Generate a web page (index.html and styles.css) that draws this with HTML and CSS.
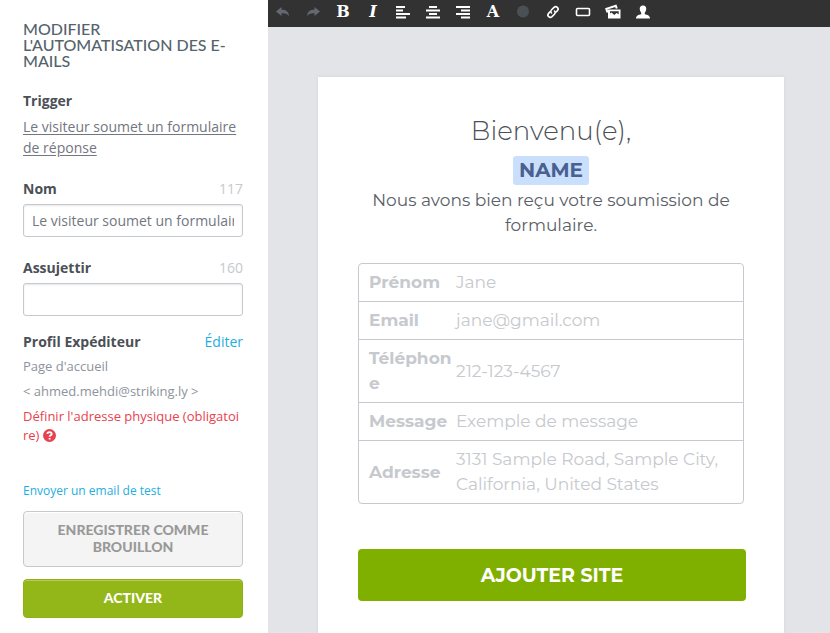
FILE: index.html
```
<!DOCTYPE html>
<html lang="fr">
<head>
<meta charset="utf-8">
<title>Modifier l'automatisation des e-mails</title>
<link rel="stylesheet" href="styles.css">
</head>
<body>
<div class="app">
  <aside class="sidebar">
    <h1 class="sidebar-title">Modifier l'automatisation des e-mails</h1>
    <section class="group">
      <h2 class="label">Trigger</h2>
      <a class="trigger" href="#">Le visiteur soumet un formulaire de réponse</a>
    </section>
    <div class="group">
      <div class="row"><label class="label" for="nom">Nom</label><span class="count">117</span></div>
      <input class="field" id="nom" type="text" value="Le visiteur soumet un formulaire de réponse">
    </div>
    <div class="group">
      <div class="row"><label class="label" for="sujet">Assujettir</label><span class="count">160</span></div>
      <input class="field" id="sujet" type="text">
    </div>
    <section class="profile">
      <div class="row"><h2 class="label">Profil Expéditeur</h2><a class="edit" href="#">Éditer</a></div>
      <p class="line">Page d'accueil</p>
      <p class="line">&lt; ahmed.mehdi@striking.ly &gt;</p>
      <a class="line warning" href="#">Définir l'adresse physique (obligatoire) <svg class="help" viewBox="0 0 12 12" aria-hidden="true"><circle cx="6" cy="6" r="6" fill="#e8424f"/><path d="M4 4.5C4.100 2.300 8 2.300 8 4.500C8 5.900 6.100 5.700 6.100 7.200M6.100 8.200V9.800" fill="none" stroke="#fff" stroke-width="1.700"/></svg></a>
    </section>
    <a class="test" href="#">Envoyer un email de test</a>
    <button class="btn btn-draft" type="button">Enregistrer comme brouillon</button>
    <button class="btn btn-activate" type="button">Activer</button>
  </aside>
  <main class="editor">
    <div class="toolbar" role="toolbar">
      <button class="tool off" type="button" aria-label="Annuler"><svg viewBox="0 0 16 16"><path d="M1 7.500L6.500 3V5.800C11 5.800 13.500 7.500 14 12C12.300 9.700 10 9.200 6.500 9.300V12Z"/></svg></button>
      <button class="tool off" type="button" aria-label="Rétablir"><svg viewBox="0 0 16 16"><path d="M15 7.500L9.500 3V5.800C5 5.800 2.500 7.500 2 12C3.700 9.700 6 9.200 9.500 9.300V12Z"/></svg></button>
      <button class="tool letter" type="button">B</button>
      <button class="tool letter italic" type="button">I</button>
      <button class="tool" type="button" aria-label="Aligner à gauche"><svg viewBox="0 0 16 16"><path d="M1 2h9v2H1zM1 5.500h7v2H1zM1 9h14v2H1zM1 12.500h10v2H1z"/></svg></button>
      <button class="tool" type="button" aria-label="Centrer"><svg viewBox="0 0 16 16"><path d="M4 2h8v2H4zM1 5.500h14v2H1zM4 9h8v2H4zM1 12.500h14v2H1z"/></svg></button>
      <button class="tool" type="button" aria-label="Aligner à droite"><svg viewBox="0 0 16 16"><path d="M1 2h14v2H1zM6 5.500h9v2H6zM1 9h14v2H1zM6 12.500h9v2H6z"/></svg></button>
      <button class="tool letter" type="button">A</button>
      <button class="tool" type="button" aria-label="Couleur"><svg viewBox="0 0 16 16"><circle cx="8" cy="7.500" r="6" fill="#4b5056"/></svg></button>
      <button class="tool" type="button" aria-label="Lien"><svg viewBox="0 0 16 16"><g fill="none" stroke="#fff" stroke-width="1.600" stroke-linecap="round"><path d="M6.500 9C5.400 7.900 5.700 6.700 6.600 5.800L9 3.400C11.200 1.400 14.500 4.200 12.500 6.600L10.800 8.300"/><path d="M9.500 7C10.600 8.100 10.300 9.300 9.400 10.200L7 12.600C4.800 14.600 1.500 11.800 3.500 9.400L5 7.900"/></g></svg></button>
      <button class="tool" type="button" aria-label="Bouton"><svg viewBox="0 0 16 16"><rect x="1.500" y="4.500" width="13" height="7" rx="1" fill="none" stroke="#fff" stroke-width="1.600"/></svg></button>
      <button class="tool" type="button" aria-label="Image"><svg viewBox="0 0 16 16"><path d="M2.500 8.500L1.300 4.800L10.800 1.800L11.800 4.500" fill="none" stroke="#fff" stroke-width="2"/><path fill-rule="evenodd" d="M3 5.500H15.500V14.500H3ZM5 7.300V9.500L6.500 8.500L9.300 11L11.500 9L13.700 10.300V7.300Z"/></svg></button>
      <button class="tool" type="button" aria-label="Contact"><svg viewBox="0 0 16 16"><path d="M8 1.500C10.500 1.500 11.600 3.200 11.200 5.500C11 7.200 10 8.300 9.800 8.800V10.300C12.500 11 15 11.500 15 14.500H1C1 11.500 3.500 11 6.200 10.300V8.800C6 8.300 5 7.200 4.800 5.500C4.400 3.200 5.500 1.500 8 1.500Z"/></svg></button>
    </div>
    <div class="canvas">
      <article class="mail">
        <h2 class="greeting">Bienvenu(e),</h2>
        <div class="name-row"><span class="name-tag">NAME</span></div>
        <p class="intro">Nous avons bien reçu votre soumission de formulaire.</p>
        <table class="fields">
          <tr><th scope="row">Prénom</th><td>Jane</td></tr>
          <tr><th scope="row">Email</th><td>jane@gmail.com</td></tr>
          <tr><th scope="row">Téléphone</th><td>212-123-4567</td></tr>
          <tr><th scope="row">Message</th><td>Exemple de message</td></tr>
          <tr><th scope="row">Adresse</th><td>3131 Sample Road, Sample City, California, United States</td></tr>
        </table>
        <button class="cta" type="button">AJOUTER SITE</button>
      </article>
    </div>
  </main>
</div>
</body>
</html>
```
FILE: styles.css
```
* { box-sizing: border-box; }
body {
  margin: 0;
  font: 14px/20px "Open Sans", "Noto Sans", sans-serif;
  color: #636972;
}
h1, h2, p { margin: 0; }
a { color: #1eaee0; text-decoration: none; }
button, input { font: inherit; }

.app { display: flex; height: 100vh; overflow: hidden; }

.sidebar {
  flex: 0 0 268px;
  display: flex;
  flex-direction: column;
  padding: 21px 25px 0 23px;
  background: #fff;
}
.sidebar-title {
  margin-bottom: 22px;
  font: 500 16px/16px "Brandon Grotesque", Lato, sans-serif;
  text-transform: uppercase;
  color: #55636c;
}
.group { margin-bottom: 21px; }
.row { display: flex; justify-content: space-between; }
.label { font-size: 14px; font-weight: 700; line-height: 20px; color: #4b5056; }
.count { color: #c6c9cd; }
.trigger {
  display: block;
  margin-top: 5px;
  line-height: 21px;
  color: #72767f;
  text-decoration: underline;
  text-underline-offset: 2px;
}
.field {
  display: block;
  width: 100%;
  height: 33px;
  margin-top: 5px;
  padding: 0 8px;
  border: 1px solid #c6c9cd;
  border-radius: 3px;
  box-shadow: inset 0 1px 2px #e6e7ea;
  color: #72767f;
}
.profile { margin: -5px 0 37px; }
.line {
  display: block;
  margin-top: 6px;
  font-size: 13px;
  line-height: 19px;
  color: #8e939c;
  word-break: break-all;
}
.row + .line { margin-top: 5px; }
.warning { color: #e8424f; }
.help { width: 13px; height: 13px; vertical-align: -2px; }
.test { margin-bottom: 11px; font-size: 12px; line-height: 18px; }

.btn {
  padding: 9px 20px 11px;
  border: 1px solid;
  border-radius: 4px;
  font: 900 14px/17px "Brandon Grotesque", Lato, sans-serif;
  text-transform: uppercase;
}
.btn-draft { margin-bottom: 12px; background: #f4f4f4; border-color: #c6c9cd; color: #999; box-shadow: inset 0 1px #fff; }
.btn-activate { background: #93b719; border-color: #8db014; color: #fff; box-shadow: inset 0 1px #b3cc5e; }

.editor { flex: 1; min-width: 0; display: flex; flex-direction: column; background: #e2e4e8; }
.toolbar { display: flex; flex: 0 0 27px; background: #323232; }
.tool {
  flex: 0 0 30px;
  display: flex;
  align-items: center;
  justify-content: center;
  padding: 0 0 3px;
  border: 0;
  background: none;
  color: #fff;
}
.tool svg { width: 16px; height: 16px; fill: currentColor; }
.off { color: #636972; }
.letter { font: 700 16px/24px "DejaVu Serif", serif; }
.italic { font-style: italic; }

.canvas { flex: 1; min-height: 0; padding: 50px 46px 0 50px; }
.mail {
  height: 100%;
  padding: 36px 40px 0;
  background: #fff;
  box-shadow: 0 0 3px #d2d4d8;
  font: 400 17px/25px Montserrat, Inter, sans-serif;
  color: #5b6067;
  text-align: center;
}
.greeting { font-size: 26px; font-weight: 300; line-height: 36px; color: #4b5056; }
.name-row { display: flex; justify-content: center; margin: 7px 0 3px; }
.name-tag {
  padding: 0 6px;
  border-radius: 3px;
  background: #c9dffb;
  color: #4a5f92;
  font-size: 20px;
  font-weight: 700;
  line-height: 29px;
}
.fields {
  width: 100%;
  margin: 25px 0 45px;
  border: 1px solid #c6c9cd;
  border-radius: 4px;
  border-spacing: 0;
  table-layout: fixed;
  color: #c6c9cd;
  text-align: left;
}
.fields th, .fields td { padding: 6px 4px; }
.fields th { width: 97px; padding-left: 10px; padding-right: 4px; font-weight: 700; word-break: break-all; }
.fields td { padding-left: 0; }
.fields tr + tr > * { border-top: 1px solid #c6c9cd; }
.cta {
  display: block;
  width: calc(100% + 2px);
  height: 52px;
  border: 0;
  border-radius: 4px;
  background: #7fb000;
  color: #fff;
  font-size: 19px;
  font-weight: 700;
}
```
